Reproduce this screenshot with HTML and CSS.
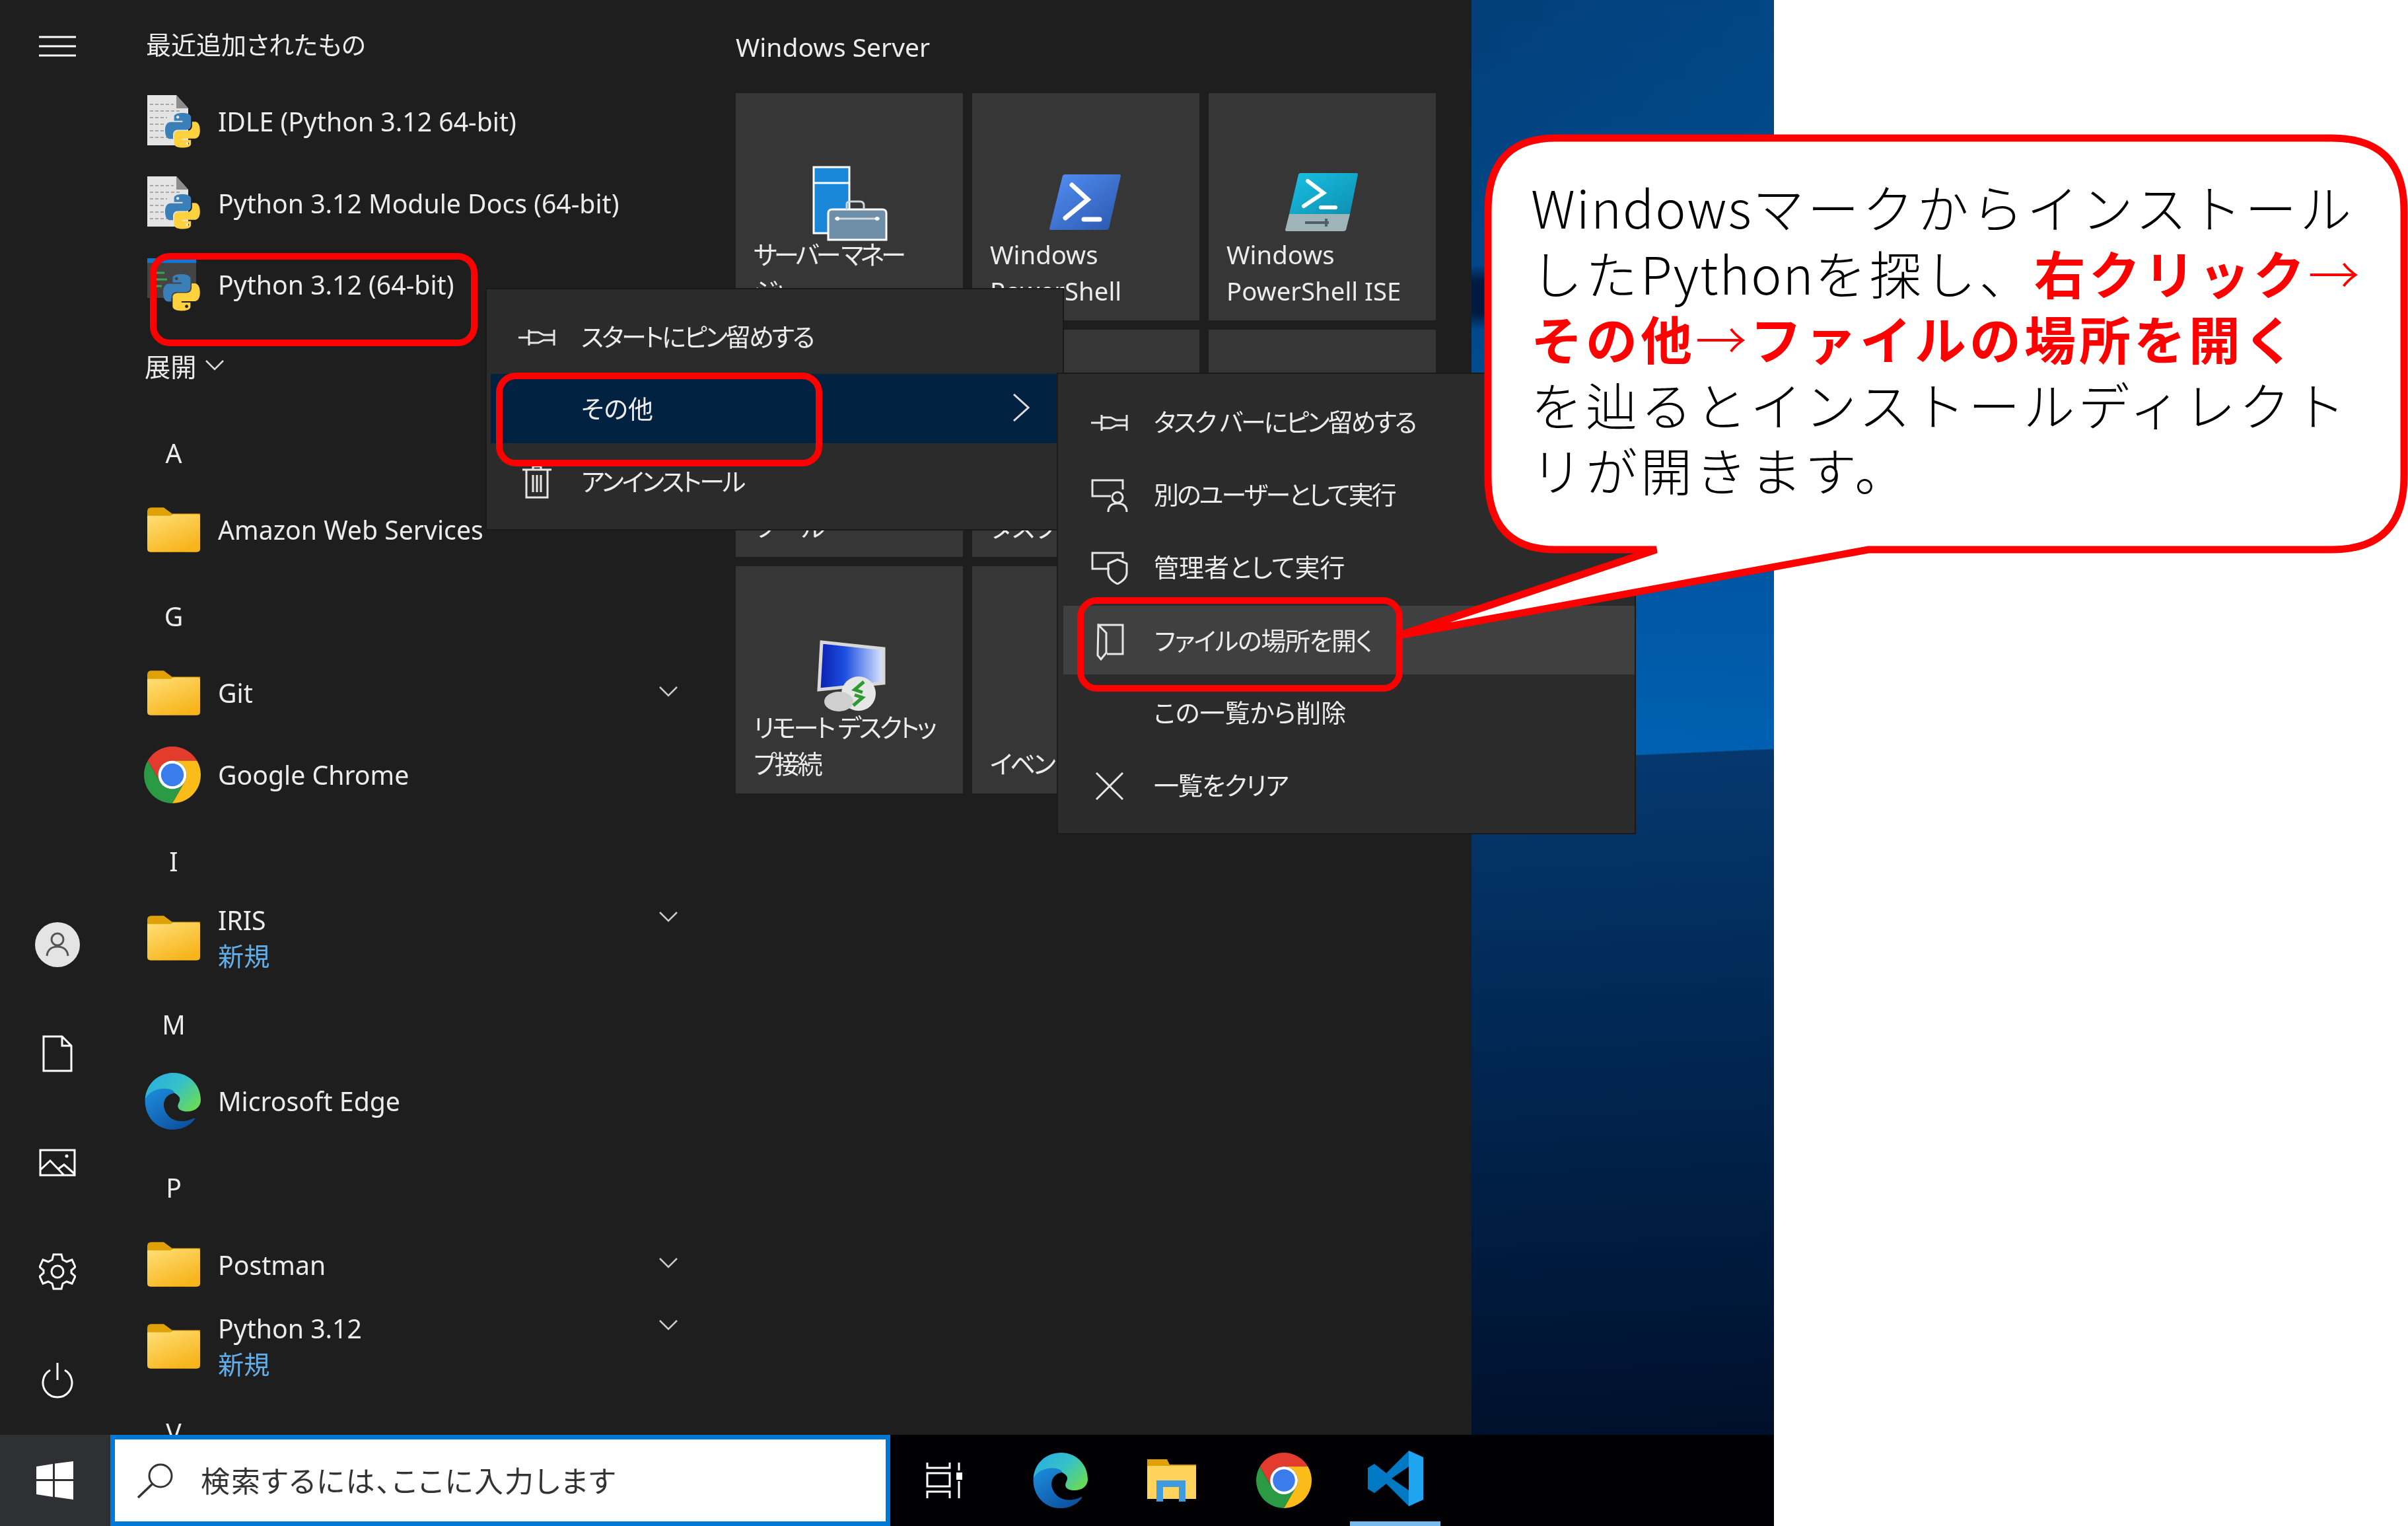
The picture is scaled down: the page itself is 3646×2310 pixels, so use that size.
FILE: index.html
```html
<!DOCTYPE html>
<html lang="ja">
<head>
    <title>Windows スタートメニュー</title>
    <meta charset="utf-8" />
    <link rel="stylesheet" href="styles.css">
</head>
<body>
<svg class="defs" width="0" height="0">
    <defs>
        <linearGradient id="folderFill" x1="0" y1="0" x2="0.6" y2="1"><stop offset="0" stop-color="#ffdf78"/><stop offset="1" stop-color="#f7b51c"/></linearGradient>
        <linearGradient id="edgeTop" x1="0" y1="0" x2="1" y2="0.7"><stop offset="0" stop-color="#2aa9e6"/><stop offset="0.55" stop-color="#35c1c8"/><stop offset="1" stop-color="#67d95c"/></linearGradient>
        <linearGradient id="edgeLow" x1="0" y1="0" x2="0.8" y2="1"><stop offset="0" stop-color="#1e8fe0"/><stop offset="1" stop-color="#0b4f9c"/></linearGradient>
        <linearGradient id="psBlue" x1="0" y1="0" x2="1" y2="1"><stop offset="0" stop-color="#5390f5"/><stop offset="1" stop-color="#2a56ac"/></linearGradient>
        <linearGradient id="iseBlue" x1="0" y1="0" x2="1" y2="1"><stop offset="0" stop-color="#19c0e2"/><stop offset="1" stop-color="#0d8fb0"/></linearGradient>
        <linearGradient id="rdpScreen" x1="0" y1="0" x2="1" y2="0"><stop offset="0" stop-color="#0a1fb0"/><stop offset="0.4" stop-color="#1c4fe0"/><stop offset="1" stop-color="#dfe8ff"/></linearGradient>
        <symbol id="py" viewBox="0 0 111 111">
            <path fill="#3b7fb8" d="M54.9 0C26.8 0 28.6 12.2 28.6 12.2l0 12.6h26.8v3.8H18C18 28.6 0 26.5 0 55c0 28.4 15.7 27.4 15.7 27.4h9.4V69.2s-.5-15.7 15.5-15.7h26.6s15 .2 15-14.5V14.7S84.5 0 54.9 0zM40.1 8.5c2.7 0 4.8 2.2 4.8 4.8s-2.2 4.8-4.8 4.8-4.8-2.2-4.8-4.8 2.2-4.8 4.8-4.8z"/>
            <path fill="#fdd23e" d="M55.7 110c28.1 0 26.3-12.2 26.3-12.2l0-12.6H55.2v-3.8h37.4s18 2 18-26.4c0-28.4-15.7-27.4-15.7-27.4h-9.4v13.2s.5 15.7-15.5 15.7H43.4s-15-.2-15 14.5v24.3s-2.3 14.7 27.3 14.7zm14.8-8.5c-2.7 0-4.8-2.2-4.8-4.8s2.2-4.8 4.8-4.8 4.8 2.2 4.8 4.8-2.2 4.8-4.8 4.8z"/>
        </symbol>
        <symbol id="pydoc" viewBox="0 0 80 80">
            <path fill="#e4e4e4" d="M0 0H44L62 20V76H0Z"/>
            <path fill="#8d8d8d" d="M44 0V20H62Z"/>
            <path stroke="#a8a8a8" stroke-width="2" stroke-dasharray="5 3" d="M4 14H40M4 24H50M4 34H30M4 44H28M4 54H26M4 64H30"/>
            <use href="#py" x="27" y="27" width="53" height="53"/>
        </symbol>
        <symbol id="folder" viewBox="0 0 77 65">
            <path fill="#e0a106" d="M0 6Q0 0 6 0H24L36 9H77V30H0Z"/>
            <path fill="url(#folderFill)" d="M0 12H34L38 10H73Q77 10 77 14V60Q77 65 72 65H5Q0 65 0 60Z"/>
        </symbol>
        <symbol id="edge" viewBox="0 0 100 100">
            <path fill="url(#edgeTop)" d="M2 46C4 18 26 0 52 0C78 0 100 20 100 48C100 60 90 68 76 68C66 68 58 64 60 56C62 50 66 46 60 40C50 30 30 30 16 38C10 41 6 44 2 46Z"/>
            <path fill="url(#edgeLow)" d="M2 46C8 34 24 26 40 28C50 29 56 34 52 36C38 38 32 52 36 64C42 82 62 92 88 80C90 79 90 80 89 82C80 94 66 100 50 100C20 100 0 74 2 46Z"/>
        </symbol>
        <symbol id="chrome" viewBox="0 0 100 100">
            <path fill="#e33b2e" d="M6.7 25A50 50 0 0 1 93.3 25H50A25 25 0 0 0 28.35 62.5Z"/>
            <path fill="#2a9a44" d="M6.7 25A50 50 0 0 0 50 100L71.65 62.5A25 25 0 0 1 28.35 62.5Z"/>
            <path fill="#fbbc1a" d="M93.3 25A50 50 0 0 1 50 100L71.65 62.5A25 25 0 0 0 50 25Z"/>
            <circle cx="50" cy="50" r="25" fill="#fff"/>
            <circle cx="50" cy="50" r="20" fill="#3a7cec"/>
        </symbol>
        <symbol id="pin" viewBox="0 0 56 32">
            <path fill="none" stroke="#e6e6e6" stroke-width="3" d="M0 16H16M16 4V28M16 8H30L38 12H54V4M16 24H30L38 20H54V28M54 4V28"/>
        </symbol>
    </defs>
</svg>

<div class="screen">
    <div class="shot">
        <div class="start">
            <!--左のレール-->
            <div class="rail">
                <svg class="rail-ico ham" width="56" height="32" viewBox="0 0 56 32"><path stroke="#fff" stroke-width="3" d="M0 2H56M0 16H56M0 30H56"/></svg>
                <div class="rail-bottom">
                    <div class="rail-item"><svg width="70" height="70" viewBox="0 0 70 70"><circle cx="35" cy="35" r="34" fill="#e4e4e4"/><circle cx="35" cy="27" r="9" fill="none" stroke="#555" stroke-width="3"/><path fill="none" stroke="#555" stroke-width="3" d="M19 52C20 42 27 38 35 38C43 38 50 42 51 52"/></svg></div>
                    <div class="rail-item"><svg width="46" height="56" viewBox="0 0 46 56"><path fill="none" stroke="#fff" stroke-width="3" d="M2 2H30L44 16V54H2ZM30 2V16H44"/></svg></div>
                    <div class="rail-item"><svg width="56" height="42" viewBox="0 0 56 42"><path fill="none" stroke="#fff" stroke-width="3" d="M2 2H54V40H2ZM2 32L17 18L38 40M30 30L38 24L54 38"/><circle cx="42" cy="11" r="2.5" fill="#fff"/></svg></div>
                    <div class="rail-item"><svg width="56" height="58" viewBox="0 0 56 58"><path fill="none" stroke="#fff" stroke-width="3" d="M22 3H34L36 11L42 14L50 11L55 22L49 27V31L55 36L50 47L42 44L36 47L34 55H22L20 47L14 44L6 47L1 36L7 31V27L1 22L6 11L14 14L20 11Z"/><circle cx="28" cy="29" r="9" fill="none" stroke="#fff" stroke-width="3"/></svg></div>
                    <div class="rail-item"><svg width="50" height="58" viewBox="0 0 50 58"><path fill="none" stroke="#fff" stroke-width="3" d="M25 2V28M14 13A22 22 0 1 0 36 13"/></svg></div>
                </div>
            </div>
            <!--アプリ一覧-->
            <div class="apps">
                <div class="apps-head">最近追加されたもの</div>
                <div class="row"><svg class="app-ico" width="80" height="80"><use href="#pydoc"/></svg><span>IDLE (Python 3.12 64-bit)</span></div>
                <div class="row"><svg class="app-ico" width="80" height="80"><use href="#pydoc"/></svg><span>Python 3.12 Module Docs (64-bit)</span></div>
                <div class="row">
                    <svg class="app-ico" width="80" height="80" viewBox="0 0 80 80"><rect y="0" width="74" height="60" fill="#444"/><rect width="74" height="7" fill="#0a78d4"/><path stroke="#3fa34d" stroke-width="3" d="M10 22H26M12 32H30M10 42H22"/><use href="#py" x="24" y="24" width="56" height="56"/></svg>
                    <span>Python 3.12 (64-bit)</span>
                </div>
                <div class="row row-more"><span>展開</span><svg class="chev" width="28" height="16" viewBox="0 0 28 16"><path fill="none" stroke="#ddd" stroke-width="2.5" d="M1 1L14 14L27 1"/></svg></div>
                <div class="row row-letter">A</div>
                <div class="row"><svg class="app-ico" width="80" height="68"><use href="#folder"/></svg><span>Amazon Web Services</span></div>
                <div class="row row-letter">G</div>
                <div class="row"><svg class="app-ico" width="80" height="68"><use href="#folder"/></svg><span>Git</span><svg class="chev chev-end" width="28" height="16" viewBox="0 0 28 16"><path fill="none" stroke="#ccc" stroke-width="2.5" d="M1 1L14 14L27 1"/></svg></div>
                <div class="row"><svg class="app-ico app-ico-round" width="86" height="86"><use href="#chrome"/></svg><span>Google Chrome</span></div>
                <div class="row row-letter">I</div>
                <div class="row"><svg class="app-ico" width="80" height="68"><use href="#folder"/></svg><span class="two-line">IRIS<em>新規</em></span><svg class="chev chev-end chev-up" width="28" height="16" viewBox="0 0 28 16"><path fill="none" stroke="#ccc" stroke-width="2.5" d="M1 1L14 14L27 1"/></svg></div>
                <div class="row row-letter">M</div>
                <div class="row"><svg class="app-ico app-ico-round" width="86" height="86"><use href="#edge"/></svg><span>Microsoft Edge</span></div>
                <div class="row row-letter">P</div>
                <div class="row"><svg class="app-ico" width="80" height="68"><use href="#folder"/></svg><span>Postman</span><svg class="chev chev-end" width="28" height="16" viewBox="0 0 28 16"><path fill="none" stroke="#ccc" stroke-width="2.5" d="M1 1L14 14L27 1"/></svg></div>
                <div class="row"><svg class="app-ico" width="80" height="68"><use href="#folder"/></svg><span class="two-line">Python 3.12<em>新規</em></span><svg class="chev chev-end chev-up" width="28" height="16" viewBox="0 0 28 16"><path fill="none" stroke="#ccc" stroke-width="2.5" d="M1 1L14 14L27 1"/></svg></div>
                <div class="row row-letter">V</div>
            </div>
            <!--タイル-->
            <div class="tiles-pane">
                <div class="tiles-head">Windows Server</div>
                <div class="tiles">
                    <div class="tile">
                        <svg class="tile-ico" width="116" height="114" viewBox="0 0 116 114"><rect x="2" y="2" width="54" height="100" fill="#1a86d8" stroke="#fff" stroke-width="3"/><path stroke="#fff" stroke-width="3" d="M2 26H56"/><path fill="#6e8da6" stroke="#fff" stroke-width="3" d="M24 72Q24 66 30 66H106Q112 66 112 72V112H24Z"/><path fill="none" stroke="#cdd6dd" stroke-width="3" d="M52 66V58Q52 54 58 54H72Q78 54 78 60V66M34 80H102"/><circle cx="38" cy="80" r="3" fill="#fff"/><circle cx="98" cy="80" r="3" fill="#fff"/></svg>
                        <div class="tile-label tile-cjk tile-tight">サーバー マネー<br>ジャー</div>
                    </div>
                    <div class="tile">
                        <svg class="tile-ico tile-ico-ps" width="108" height="84" viewBox="0 0 108 84"><path fill="url(#psBlue)" d="M20 2Q21 0 24 0H106Q108 0 108 2L90 82Q89 84 86 84H2Q0 84 0 82Z"/><path fill="none" stroke="#fff" stroke-width="7" stroke-linecap="round" d="M34 16L58 38L24 66M52 68H76"/></svg>
                        <div class="tile-label">Windows PowerShell</div>
                    </div>
                    <div class="tile">
                        <svg class="tile-ico tile-ico-ise" width="110" height="88" viewBox="0 0 110 88"><path fill="url(#iseBlue)" d="M20 2Q21 0 24 0H108Q110 0 110 2L98 62H6Z"/><path fill="#9fb4b9" d="M6 62H98L92 86Q91 88 88 88H2Q0 88 0 86Z"/><path fill="none" stroke="#fff" stroke-width="6" stroke-linecap="round" d="M34 12L58 30L28 50M54 52H76"/><path stroke="#4d6168" stroke-width="4" d="M30 75H66M62 69V81"/></svg>
                        <div class="tile-label">Windows<br>PowerShell ISE</div>
                    </div>
                    <div class="tile"><div class="tile-label">Windows 管理<br>ツール</div></div>
                    <div class="tile"><div class="tile-label">Windows 管理<br>タスク</div></div>
                    <div class="tile"><div class="tile-label">コントロール パネル</div></div>
                    <div class="tile">
                        <svg class="tile-ico tile-ico-rdp" width="108" height="110" viewBox="0 0 108 110"><path fill="url(#rdpScreen)" stroke="#d8d8d8" stroke-width="5" d="M8 4L102 14V66L4 76Z"/><circle cx="64" cy="82" r="26" fill="#e6e6e6"/><ellipse cx="34" cy="94" rx="22" ry="15" fill="#cfcfcf"/><path fill="none" stroke="#2d9a2d" stroke-width="5" d="M72 64L58 76L70 80M56 100L70 88L58 84"/></svg>
                        <div class="tile-label tile-cjk">リモート デスクトッ<br>プ接続</div>
                    </div>
                    <div class="tile"><div class="tile-label tile-cjk">イベント ビューアー</div></div>
                    <div class="tile"><div class="tile-label">エクスプローラー</div></div>
                </div>
            </div>
        </div>

        <div class="taskbar">
            <div class="win-btn">
                <svg width="56" height="58" viewBox="0 0 56 58"><path fill="#fff" d="M0 8L25 4V27H0ZM28 3.5L56 0V27H28ZM0 30H25V54L0 50ZM28 30H56V58L28 54Z"/></svg>
            </div>
            <div class="search">
                <svg width="58" height="54" viewBox="0 0 58 54"><circle cx="36" cy="20" r="17" fill="none" stroke="#333" stroke-width="3"/><path stroke="#333" stroke-width="3.5" d="M24 32L2 53"/></svg>
                <span>検索するには、ここに入力します</span>
            </div>
            <div class="task-icons">
                <svg class="task-view" width="56" height="54" viewBox="0 0 56 54"><path fill="none" stroke="#fff" stroke-width="3" d="M2 0V8H36V0M2 54V44H36V54M2 16H36V36H2ZM50 0V12M50 28V54"/><rect x="46" y="15" width="9" height="11" fill="#fff"/></svg>
                <svg class="task-ico" width="84" height="84"><use href="#edge"/></svg>
                <svg class="task-ico" width="74" height="64" viewBox="0 0 74 64"><path fill="#e0a106" d="M0 0H30L34 8H74V20H0Z"/><path fill="#ffd35c" d="M0 10H74V60H0Z"/><path fill="#3f9be0" d="M14 32H58V64H48V42H24V64H14Z"/></svg>
                <svg class="task-ico" width="84" height="84"><use href="#chrome"/></svg>
                <div class="task-active">
                    <svg width="84" height="84" viewBox="0 0 84 84"><path fill="#0079c4" d="M62 0L28 34L10 20L0 26V58L10 64L28 50L62 84L84 74V10ZM62 24V60L36 42Z"/><path fill="#1fa5ef" d="M62 0L84 10V74L62 84Z"/></svg>
                </div>
            </div>
        </div>

        <!--右クリックメニュー-->
        <div class="menu menu-main">
            <div class="menu-item menu-first"><svg class="menu-ico" width="56" height="32"><use href="#pin"/></svg><span class="kana">スタートにピン留めする</span></div>
            <div class="menu-item menu-sel"><span class="menu-text">その他</span><svg class="menu-arrow" width="26" height="42" viewBox="0 0 26 42"><path fill="none" stroke="#ddd" stroke-width="3" d="M2 1L24 21L2 41"/></svg></div>
            <div class="menu-item"><svg class="menu-ico" width="56" height="50" viewBox="0 0 56 50"><path fill="none" stroke="#e6e6e6" stroke-width="3" d="M6 6H50M22 6V1H34V6M12 6V48H44V6M22 14V40M28 14V40M34 14V40"/></svg><span class="kana">アンインストール</span></div>
        </div>
        <div class="menu menu-sub">
            <div class="menu-item"><svg class="menu-ico" width="56" height="32"><use href="#pin"/></svg><span class="kana">タスク バーにピン留めする</span></div>
            <div class="menu-item"><svg class="menu-ico" width="56" height="50" viewBox="0 0 56 50"><path fill="none" stroke="#e6e6e6" stroke-width="3" d="M30 26H2V2H48V16"/><circle cx="40" cy="28" r="8" fill="none" stroke="#e6e6e6" stroke-width="3"/><path fill="none" stroke="#e6e6e6" stroke-width="3" d="M26 50C26 40 32 37 40 37C48 37 54 40 54 50"/></svg><span class="kana">別のユーザーとして実行</span></div>
            <div class="menu-item"><svg class="menu-ico" width="56" height="50" viewBox="0 0 56 50"><path fill="none" stroke="#e6e6e6" stroke-width="3" d="M28 26H2V2H48V10"/><path fill="none" stroke="#e6e6e6" stroke-width="3" d="M26 18L40 12L54 18V32Q54 42 40 49Q26 42 26 32Z"/></svg><span>管理者として実行</span></div>
            <div class="menu-item menu-hover"><svg class="menu-ico menu-ico-door" width="42" height="56" viewBox="0 0 42 56"><path fill="none" stroke="#e6e6e6" stroke-width="3" d="M3 2H40V46H16M3 2L15 14V44L7 54L2 48Z"/></svg><span class="kana-s">ファイルの場所を開く</span></div>
            <div class="menu-item"><span class="menu-text">この一覧から削除</span></div>
            <div class="menu-item"><svg class="menu-ico" width="56" height="42" viewBox="0 0 56 42"><path stroke="#e6e6e6" stroke-width="3" d="M8 1L48 41M48 1L8 41"/></svg><span class="kana-s">一覧をクリア</span></div>
        </div>
    </div>

    <!--赤枠の注釈-->
    <div class="mark mark-python"></div>
    <div class="mark mark-other"></div>
    <div class="mark mark-file"></div>

    <div class="callout">
        <svg class="callout-shape" width="1560" height="790" viewBox="2100 195 1560 790"><path fill="#fff" stroke="#f00" stroke-width="11" d="M2355 209H3530Q3640 209 3640 319V722Q3640 832 3530 832H2829L2118 962L2508 832H2355Q2253 832 2253 722V319Q2253 209 2355 209Z"/></svg>
        <div class="callout-text">
            <div class="line"><span class="latin">Windows</span>マークからインストール</div>
            <div class="line">した<span class="latin">Python</span>を探し、<b>右クリック</b><i>→</i></div>
            <div class="line"><b>その他</b><i>→</i><b>ファイルの場所を開く</b></div>
            <div class="line">を辿るとインストールディレクト</div>
            <div class="line">リが開きます。</div>
        </div>
    </div>
</div>
</body>
</html>
```
FILE: styles.css
```css
html,body{margin:0;padding:0;background:#fff;}
body{font-family:"Noto Sans","Noto Sans CJK JP",sans-serif;}
.defs{position:absolute;}
.screen{position:relative;width:3646px;height:2310px;overflow:hidden;}

/*screenshot*/
.shot{
    position:relative;
    width:2686px;
    height:2310px;
    display:flex;
    flex-direction:column;
    overflow:hidden;
    filter:blur(.7px);
    background:
        linear-gradient(177.5deg,transparent 0 1249px,#06386e 1251px,#012a58 1600px,#00102c 2276px),
        radial-gradient(ellipse 260px 50px at 2280px 450px,#001a40 0,#001a40 50%,rgba(0,26,64,0) 100%),
        linear-gradient(90deg,transparent 2228px,rgba(0,90,170,.25) 2686px),
        linear-gradient(180deg,#023f78 0,#014d92 700px,#0062b4 1140px);
}
.start{
    display:flex;
    width:2228px;
    height:2172px;
    flex:none;
    background:#1e1e1e;
    color:#ececec;
    font-size:39.2px;
    overflow:hidden;
    font-feature-settings:"palt";
}

/*rail*/
.rail{
    width:223px;
    flex:none;
    display:flex;
    flex-direction:column;
    align-items:center;
    padding-right:50px;
    box-sizing:border-box;
}
.ham{display:block;margin-top:54px;}
.rail-bottom{margin-top:auto;}
.rail-item{
    height:165px;
    display:flex;
    align-items:center;
    justify-content:center;
}

/*list*/
.apps{width:891px;flex:none;}
.apps-head{height:122px;padding-top:40px;box-sizing:border-box;line-height:54px;font-size:38px;margin-left:-2px;}
.row{
    display:flex;
    align-items:center;
    height:123.6px;
    position:relative;
}
.app-ico{flex:none;margin-right:27px;}
.app-ico-round{margin:0 26px 0 -5px;}
.row-more{margin-left:-4px;padding-bottom:4px;box-sizing:border-box;}
.row-more svg{margin-left:14px;}
.row-letter{padding-top:14px;box-sizing:border-box;width:80px;justify-content:center;}
.two-line{display:block;line-height:54px;}
.two-line em{display:block;font-style:normal;color:#63aee8;}
.chev-end{position:absolute;right:88px;top:52px;}
.chev-up{top:22px;}

/*tiles*/
.tiles-pane{flex:none;width:1060px;}
.tiles-head{height:141px;padding-top:44px;box-sizing:border-box;line-height:54px;font-size:39px;}
.tiles{
    display:grid;
    grid-template-columns:repeat(3,344px);
    grid-template-rows:repeat(3,344px);
    gap:14px;
}
.tile{
    background:#363636;
    position:relative;
    display:flex;
    flex-direction:column;
    justify-content:flex-end;
    padding:0 0 17px 27px;
    overflow:hidden;
    box-sizing:border-box;
    font-size:38.3px;
}
.tile-label{padding-right:28px;line-height:55px;}
.tile-cjk{letter-spacing:-3.5px;padding-right:0;white-space:nowrap;}
.tile-tight{letter-spacing:-5px;}
.tile-ico{position:absolute;top:110px;left:116px;}
.tile-ico-ps{top:123px;left:117px;}
.tile-ico-ise{top:121px;left:116px;}
.tile-ico-rdp{top:111px;left:122px;}

/*taskbar*/
.taskbar{
    flex:1;
    display:flex;
    background:#010104;
}
.win-btn{
    width:167px;
    flex:none;
    background:#2e3033;
    display:flex;
    align-items:center;
    padding-left:55px;
    box-sizing:border-box;
}
.search{
    width:1181px;
    flex:none;
    background:#fff;
    border:7px solid #0078d7;
    box-sizing:border-box;
    display:flex;
    align-items:center;
    padding:0 0 3px 33px;
    gap:39px;
    color:#333;
    font-size:44px;
    letter-spacing:2px;
    font-feature-settings:"palt";
}
.search svg{margin-top:3px;}
.task-icons{flex:1;display:flex;align-items:center;position:relative;}
.task-view{margin-left:54px;}
.task-ico{margin-left:105px;}
.task-icons svg:nth-child(3){margin-left:90px;}
.task-icons svg:nth-child(4){margin-left:91px;}
.task-active{
    margin-left:58px;
    width:137px;
    height:138px;
    box-sizing:border-box;
    border-bottom:7px solid #76b9ed;
    display:flex;
    align-items:center;
    justify-content:center;
}

/*menus*/
.menu{
    position:absolute;
    background:#2b2b2b;
    border:2px solid #1a1a1a;
    box-sizing:border-box;
    color:#ececec;
    font-size:38px;
    font-feature-settings:"palt";
}
.menu-main{left:735px;top:436px;width:876px;height:367px;padding:15px 8px 0 6px;}
.menu-main .menu-item{height:110px;}
.menu-main .menu-first{height:108px;margin-bottom:5px;}
.menu-main .menu-sel{height:105px;padding-bottom:4px;box-sizing:border-box;}
.menu-sub{left:1600px;top:564px;width:877px;height:699px;padding:15px 0 0 8px;}
.menu-sub .menu-item{height:110px;}
.menu-sub .menu-hover{height:104px;margin-top:6px;padding-bottom:3px;box-sizing:border-box;}
.menu-item{display:flex;align-items:center;padding-left:42px;position:relative;}
.menu-ico{flex:none;margin:8px 39px 0 0;}
.menu-ico-door{margin:8px 46px 0 8px;}
.menu-text{padding-left:95px;}
.kana{letter-spacing:-3px;}
.kana-s{letter-spacing:-1.4px;}
.menu-sel{background:#002240;}
.menu-arrow{position:absolute;right:42px;top:30px;}
.menu-hover{background:#404040;}

/*marks*/
.mark{position:absolute;border:10px solid #f00;box-sizing:border-box;border-radius:30px;}
.mark-python{left:227px;top:383px;width:496px;height:141px;}
.mark-other{left:751px;top:564px;width:494px;height:142px;}
.mark-file{left:1631px;top:904px;width:493px;height:143px;}

/*callout*/
.callout{position:absolute;left:0;top:0;}
.callout-shape{position:absolute;left:2100px;top:195px;}
.callout-text{
    position:absolute;
    left:2318px;
    top:263px;
    width:1300px;
    font-family:"Noto Sans CJK JP","Noto Sans",sans-serif;
    font-size:78px;
    line-height:99.5px;
    font-weight:300;
    letter-spacing:5px;
    color:#000;
    white-space:nowrap;
}
.latin{letter-spacing:2px;}
.callout-text b{color:#f00;font-weight:700;}
.callout-text i{color:#f00;font-style:normal;font-weight:300;}
```
